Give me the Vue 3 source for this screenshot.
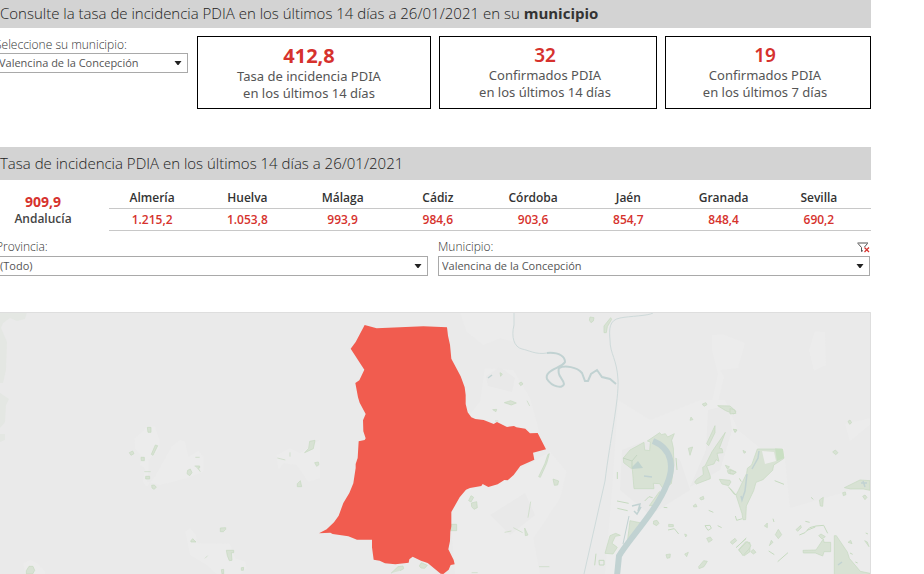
<script setup>
import { ref } from 'vue'

const town = ref('Valencina de la Concepción')
const province = ref('(Todo)')
const mapTown = ref('Valencina de la Concepción')

const cards = [
  { value: '412,8', label: 'Tasa de incidencia PDIA', period: 'en los últimos 14 días', main: true },
  { value: '32', label: 'Confirmados PDIA', period: 'en los últimos 14 días' },
  { value: '19', label: 'Confirmados PDIA', period: 'en los últimos 7 días' },
]

const provinces = [
  { name: 'Almería', rate: '1.215,2' },
  { name: 'Huelva', rate: '1.053,8' },
  { name: 'Málaga', rate: '993,9' },
  { name: 'Cádiz', rate: '984,6' },
  { name: 'Córdoba', rate: '903,6' },
  { name: 'Jaén', rate: '854,7' },
  { name: 'Granada', rate: '848,4' },
  { name: 'Sevilla', rate: '690,2' },
]
</script>

<template>
  <main class="dashboard">
    <h1 class="band band-top">Consulte la tasa de incidencia PDIA en los últimos 14 días a 26/01/2021 en su <b>municipio</b></h1>

    <section class="summary">
      <div class="field picker">
        <label for="town">Seleccione su municipio:</label>
        <div class="drop">
          <select id="town" v-model="town"><option>Valencina de la Concepción</option></select>
          <svg class="arrow" viewBox="0 0 8 5" aria-hidden="true"><path d="M0.500 0H7.500L4.500 4H3.500Z" /></svg>
        </div>
      </div>
      <div class="cards">
        <article v-for="(card, i) in cards" :key="i" class="card" :class="{ main: card.main }">
          <strong>{{ card.value }}</strong>
          <span>{{ card.label }}</span>
          <span>{{ card.period }}</span>
        </article>
      </div>
    </section>

    <h2 class="band">Tasa de incidencia PDIA en los últimos 14 días a 26/01/2021</h2>

    <section class="rates">
      <div class="region">
        <strong>909,9</strong>
        <span>Andalucía</span>
      </div>
      <table>
        <thead>
          <tr><th v-for="p in provinces" :key="p.name" scope="col">{{ p.name }}</th></tr>
        </thead>
        <tbody>
          <tr><td v-for="p in provinces" :key="p.name">{{ p.rate }}</td></tr>
        </tbody>
      </table>
    </section>

    <section class="filters">
      <div class="field">
        <label for="province">Provincia:</label>
        <div class="drop">
          <select id="province" v-model="province"><option>(Todo)</option></select>
          <svg class="arrow" viewBox="0 0 8 5" aria-hidden="true"><path d="M0.500 0H7.500L4.500 4H3.500Z" /></svg>
        </div>
      </div>
      <div class="field">
        <div class="label-row">
          <label for="map-town">Municipio:</label>
          <button type="button" class="clear" aria-label="Borrar filtro">
            <svg viewBox="0 0 13 11" fill="none" aria-hidden="true">
              <path d="M0.500 1H11M1 1.500L4.500 5.500V9.500L6 8.500M10.500 1.500L7.500 5" stroke="#555" />
              <path d="M7.500 5.500L12 10M12 5.500L7.500 10" stroke="#d6322d" stroke-width="1.200" />
            </svg>
          </button>
        </div>
        <div class="drop">
          <select id="map-town" v-model="mapTown"><option>Valencina de la Concepción</option></select>
          <svg class="arrow" viewBox="0 0 8 5" aria-hidden="true"><path d="M0.500 0H7.500L4.500 4H3.500Z" /></svg>
        </div>
      </div>
    </section>

    <svg class="map" viewBox="0 312 871 262" role="img" aria-label="Mapa de Valencina de la Concepción">
      <rect x="0" y="312" width="871" height="262" fill="#eaeaea" />

      <!-- built-up land -->
      <g fill="#ececec">
        <g transform="translate(0 305) scale(.33333)">
          <path d="M404 400L430 378L440 362L465 365L478 405L478 432L446 465L446 500L440 530L480 540L560 520L610 500L610 455L595 437L565 455L555 410L540 405L515 425L465 515L440 545L428 530L435 490L420 480L425 455L405 430ZM830 450L870 430L900 445L960 405V520L925 530L890 480L850 475L835 495ZM556 680L570 670L588 690L590 715L690 716L705 760L735 770L740 790L720 807H650L620 780L570 750ZM70 775L90 765L112 775L135 800V807H75Z" />
        </g>
        <g transform="translate(300 305) scale(.33333)">
          <path d="M480 22H640V110L600 100L550 120L500 80ZM555 190L640 195L690 280L720 390L500 340L540 290ZM750 440L800 500L780 580L700 700L720 807H465L450 620L500 550L600 530Z" />
        </g>
        <path d="M618 400L650 420L700 400L725 400L738 430L760 448L784 448L790 508L845 492L871 482V574H605L612 490ZM712 335L722 334L745 343L738 368L720 370L724 377L718 402H712L718 374L712 350ZM815 331L825 332L826 365L814 371L809 350ZM845 424L871 418V424L850 441Z" />
      </g>
      <g fill="#e9e9e9">
        <path d="M486 376L500 367L515 378L512 392L488 386ZM490 515L525 493L535 515L510 535ZM622 450L645 441L680 460L690 490L650 515L620 490ZM708 410L728 405L732 430L720 470L690 487L706 450Z" />
      </g>
      <path d="M0 312H27L25 319L17 321L10 318L3 323L1 328L7 342L6 370L3 383H0ZM0 393L9 399L6 405L5 422L0 428ZM0 434H5L5 440L0 442Z" fill="#e4e7e3" />

      <!-- parks and groves -->
      <g fill="#d8e2d4" stroke="#c6dac0" stroke-width="2">
        <g transform="translate(0 305) scale(.33333)">
          <path d="M442 367H453V382H444ZM388 443L398 438L402 446L393 451ZM454 448L466 420L473 422L459 451ZM423 457H433V467H424ZM433 500H452M437 514H449V522H437ZM455 541L463 540L469 547L462 553L456 549ZM586 457H599M563 496L571 492L576 503L569 512L561 506ZM584 483H599V489H594L601 500M832 459L856 465M870 442V455M929 409L945 406L940 431L914 443L926 430ZM944 473L955 471L957 479L950 484ZM892 536L901 527L905 545H892ZM661 669L677 668V673L670 680H661ZM572 708L578 701L588 711H573ZM679 736H701V743H694L696 766L688 767L682 752ZM615 760L623 752M664 794L671 793V807H666ZM724 788L731 787L730 796H724ZM79 797L87 784L99 784L104 796L98 807H79Z" />
        </g>
        <g transform="translate(300 305) scale(.33333)">
          <path d="M870 36L882 38L880 48L873 53L868 46ZM932 38L912 63V83H919L922 65L935 43ZM600 203L607 207L602 214ZM657 235L664 231L669 237L662 242ZM613 293L632 287L649 294L634 300ZM681 287L689 303M578 314L590 313L588 320ZM585 348H595M748 446L740 475L721 517L716 515L735 475L744 448ZM759 522L776 528L773 540L763 541ZM513 572L521 577L513 591L506 587ZM514 594L530 590L532 608L522 613L515 605ZM453 658H470V677H453ZM692 590L684 638M614 682L634 678M640 668L668 683M674 669L684 690L676 692ZM358 783L364 773L382 781L374 790L363 789ZM273 805L294 785L309 783L311 791L300 797M717 785H748M515 803H533" />
        </g>
        <g transform="translate(570 400) scale(.33333)">
          <path d="M160 174L180 150L222 127L224 150L239 152L241 126L232 123L269 98L274 104L286 101L293 111L313 101L305 121L310 144L312 195L304 251L280 267L269 251L250 250L252 266H192L187 208L161 188ZM120 407L137 400L151 406L136 409L126 430L142 442L129 462L105 460ZM180 362L214 369L179 419L173 418ZM238 317L268 275L275 279L250 316ZM397 12L408 8L411 14L402 19ZM443 17L480 18L498 34L492 42L467 32ZM363 51L369 59L360 61ZM491 88L501 91L495 97ZM435 77L410 131L416 137L435 98ZM466 97L426 155L405 198L398 202L400 224L380 238L374 247L379 252L421 236L421 229L410 198L432 192L438 179L447 184L441 160L459 158L456 146L448 145ZM355 145L368 141L360 166ZM519 151L528 156L522 160ZM466 196L478 200L473 208ZM472 212L480 207L498 216L490 223L475 220ZM448 238L480 241L483 246L476 257L456 252ZM370 317L377 312L381 320L371 321ZM389 294L400 289L402 297L393 300ZM251 363L261 361L267 370L260 377L250 372ZM296 373L310 374V380H296ZM410 415L421 411L427 420L416 427ZM481 426L495 415L500 422L487 433ZM344 402L351 405L347 411ZM288 464L301 462L300 473L291 475ZM344 462L355 457L350 470ZM386 500L401 482L412 484L402 500L387 506ZM505 450L527 425L540 428V455L523 467Z" />
          <path d="M141 303L176 310M142 325L173 332M224 303L237 290L248 293M318 174L321 210M142 216V237M475 260L494 284M416 331L430 337M281 322L292 323M294 390L313 386L326 402M405 377L420 376L424 385L414 391ZM443 377L455 383M500 442L529 414M78 461L74 496M87 481H102V495H88Z" fill="none" stroke-width="3" />
        </g>
        <g transform="translate(730 400) scale(.33333)">
          <path d="M0 26L13 29L18 40L0 42ZM10 88L20 89L16 97ZM82 147H157L162 175L144 187L131 195L128 211L99 239L78 247L71 272L49 318L47 359H39L36 341L18 285L25 272L50 220L52 205L65 195ZM0 210L19 217L12 222L0 221ZM103 378L112 369V383ZM136 404L145 388L155 404L145 416ZM118 437L124 421L129 427ZM27 450L51 425L63 436L57 447L39 467ZM62 455L70 448L78 457L70 462ZM354 64L360 60L365 68L359 73ZM308 156L316 150L324 158L317 164ZM343 263L390 240L420 242V271L400 267H362ZM338 278L346 276L348 284L340 287ZM398 289L405 285L411 292L405 299ZM268 300L280 292L278 319L271 318ZM198 389L212 376L214 383L203 394ZM266 407L273 402L286 410L276 417ZM219 451L258 450L280 417L282 427H302V455H282L278 468L256 459H220ZM313 407H319L352 456L358 475L391 514L420 520V530H313ZM354 427L362 421L366 431ZM404 422L412 426L417 440Z" />
          <path d="M28 235L34 245M0 265L18 285M16 348L20 361L37 356M134 242L162 253M129 356L132 366M18 443L48 416M116 453L133 464M143 485L174 458M243 292L250 298M226 364L239 367M208 405L225 398L239 383L258 378L281 376L293 400M231 391L256 381M407 399L414 402M360 459L368 463M376 486L383 489" fill="none" stroke-width="3" />
        </g>
      </g>
      <path d="M775 448.500L783 449L784 458L777 461Z" fill="#c9dfc3" />
      <path d="M762 451L774 452L776 461L765 464Z" fill="#ededed" />

      <!-- rivers and ponds -->
      <g fill="none" stroke="#cedada" stroke-width="1">
        <path d="M514 313V325C511 337 514 347 522 349C528 350 536 355 547 353M653 313C648 316 630 316 620 318C609 320 609 329 610 340C610 354 617 359 618 380C619 400 610 440 605 481L584 574" />
      </g>
      <g fill="none" stroke="#c1d2d2">
        <path d="M547 353C560 352 565 357 565 362C562 368 544 370 547 379C552 387 563 389 564 384C564 379 556 376 559 368C565 365 577 367 582 373L585 381H588L591 374L597 370L602 377L610 379L616 384" stroke-width="2" />
        <path d="M653 441C673 449 674 468 667 484C656 512 628 540 619 556L617 576" stroke-width="6" />
        <path d="M629 516L623 544" stroke-width="1" />
        <path d="M632 506L640 504L638 511L641 507L637 514L634 511M759 451L758 458L752 469M747 474L745 491L742 500L741 496M861 483L867 483M863 481L865 487M488 378L492 375M838 565L842 562M644 476L652 477" stroke-width="1.500" />
      </g>
      <path d="M632 467L638 461L643 468L632 469Z" fill="#c0d3ce" />
      <path d="M623 458L632 461L637 455M632 461V468" fill="none" stroke="#c4d6c2" />

      <!-- selected municipality -->
      <g transform="translate(300 305) scale(.33333)">
        <path class="town" d="M194 60L230 70L370 64L441 67L444 92L450 119L454 161L482 214L494 247L497 270V297L503 322L514 337L526 342L551 345L581 357L591 351L621 366L642 363L649 367L676 371L690 385L713 384L738 433L699 443L703 464L661 483L641 510L623 526L613 525L593 538L565 546L548 537L544 543L510 549L498 554L479 577L454 621V664L451 681L450 708L445 733L461 765L464 778L452 780L446 794L430 807L422 806L383 774L363 767L338 755L328 763L326 773L286 778L255 775L239 767L221 764L216 727V704L171 704L145 694L98 687L91 683L57 685L80 673L102 652L116 632L130 594L148 564L160 535L167 489V477L173 459L176 409L194 405L197 400L190 379L189 346L197 327L179 293L174 277L166 234L178 226L193 194L152 131L167 111Z" />
      </g>
      <path d="M0 312.500H870.500V574" fill="none" stroke="#dedede" />
    </svg>
  </main>
</template>

<style>
body {
  margin: 0;
  background: #fff;
}
</style>

<style scoped>
.dashboard {
  margin-right: 53px;
  overflow: hidden;
  color: #333;
  font-family: "Open Sans", "Noto Sans", sans-serif;
  font-size: 13px;
  font-weight: 300;
}
.band {
  margin: 0;
  height: 33px;
  background: #d3d3d3;
  color: #222;
  font-size: 15px;
  font-weight: 300;
  line-height: 33px;
  white-space: nowrap;
}
.band-top {
  height: 28px;
  line-height: 26px;
}
.band b {
  color: #333;
  font-weight: 700;
}
.summary {
  display: flex;
  align-items: flex-start;
  gap: 9px;
  padding-top: 8px;
  margin-bottom: 38px;
}
.field {
  display: flex;
  flex-direction: column;
  min-width: 0;
}
.field label {
  font-size: 12px;
  line-height: 17px;
}
.picker {
  flex: 0 0 193px;
  margin-left: -5px;
}
.drop {
  position: relative;
}
select {
  display: block;
  box-sizing: border-box;
  width: 100%;
  height: 20px;
  padding: 0 24px 1px 3px;
  border: 1px solid #a9a9a9;
  border-radius: 0;
  appearance: none;
  background: #fff;
  color: #555;
  font: inherit;
  font-size: 11px;
  font-weight: 400;
}
.arrow {
  position: absolute;
  top: 8px;
  right: 6px;
  width: 8px;
  height: 5px;
  fill: #222;
  pointer-events: none;
}
.cards {
  display: grid;
  flex: 1;
  grid-template-columns: 234fr 218fr 206fr;
  gap: 8px;
}
.card {
  display: flex;
  box-sizing: border-box;
  flex-direction: column;
  align-items: center;
  min-height: 73px;
  padding: 6px 6px 0 0;
  border: 1px solid #000;
  color: #555;
  font-family: "Noto Sans", "Open Sans", sans-serif;
  font-weight: 400;
  line-height: 17px;
}
.card.main {
  padding-right: 10px;
}
.card strong {
  color: #d6322d;
  font-size: 19px;
  font-weight: 600;
  line-height: 24px;
}
.card.main strong {
  font-size: 20px;
  font-weight: 700;
  line-height: 25px;
}
.rates {
  display: flex;
  padding-top: 7px;
}
.region {
  display: flex;
  flex: 0 0 109px;
  box-sizing: border-box;
  flex-direction: column;
  align-items: center;
  padding: 6px 23px 0 0;
  color: #444;
  font-size: 12px;
  font-weight: 600;
  line-height: 17px;
}
.region strong {
  color: #d6322d;
  font-size: 14px;
  font-weight: 700;
}
table {
  flex: 1;
  width: 100%;
  border-collapse: collapse;
  table-layout: fixed;
  font-size: 12px;
}
th,
td {
  height: 21px;
  padding: 0 9px 0 0;
  border-bottom: 1px solid #c8c8c8;
  color: #333;
  font-weight: 600;
  line-height: 20px;
  text-align: center;
}
td {
  color: #d6322d;
}
.filters {
  display: grid;
  grid-template-columns: 432fr 432fr;
  gap: 10px;
  margin: 7px 1px 36px -4px;
}
.label-row {
  display: flex;
  align-items: center;
  justify-content: space-between;
}
.filters .field label {
  line-height: 18px;
}
.clear {
  width: 13px;
  height: 11px;
  padding: 0;
  border: 0;
  background: none;
}
.clear svg {
  display: block;
  width: 13px;
  height: 11px;
}
.map {
  display: block;
  width: 100%;
  height: auto;
}
.town {
  fill: #f15c4f;
}
</style>
